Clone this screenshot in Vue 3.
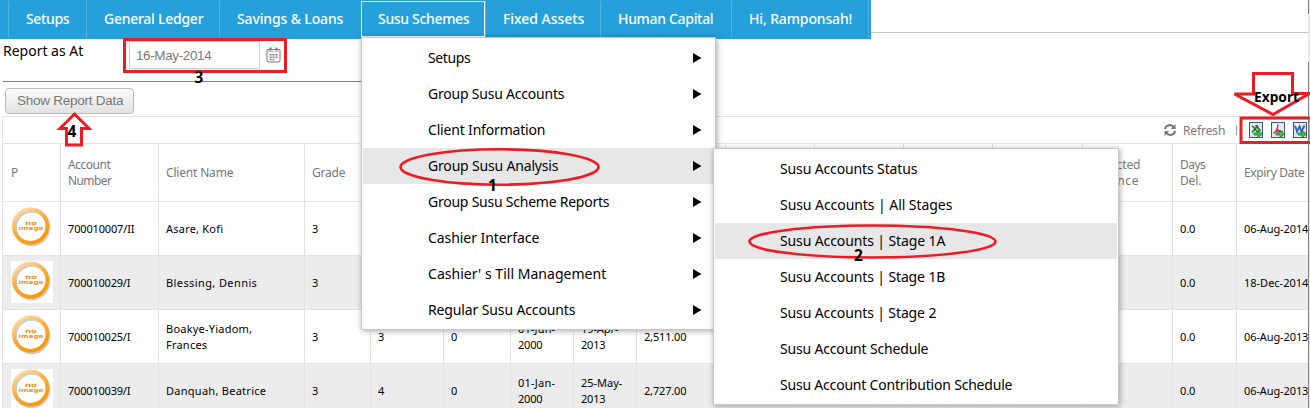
<script setup>
const nav = [
  { t: 'Setups', w: 43, cell: 78 },
  { t: 'General Ledger', w: 99, cell: 133 },
  { t: 'Savings & Loans', w: 106, cell: 142 },
  { t: 'Susu Schemes', w: 91, cell: 124, on: true },
  { t: 'Fixed Assets', w: 81, cell: 115 },
  { t: 'Human Capital', w: 95, cell: 131 },
  { t: 'Hi, Ramponsah!', w: 103, cell: 138 },
]
const menu = [
  ['Setups', 42], ['Group Susu Accounts', 136], ['Client Information', 117], ['Group Susu Analysis', 130],
  ['Group Susu Scheme Reports', 181], ['Cashier Interface', 111], ["Cashier' s Till Management", 178], ['Regular Susu Accounts', 147],
]
const sub = [
  ['Susu Accounts Status', 137], ['Susu Accounts | All Stages', 172], ['Susu Accounts | Stage 1A', 165], ['Susu Accounts | Stage 1B', 165],
  ['Susu Accounts | Stage 2', 156], ['Susu Account Schedule', 148], ['Susu Account Contribution Schedule', 232],
]
const heads = [
  [['P', 6]], [['Account', 42], ['Number', 43]], [['Client Name', 67]], [['Grade', 33]], [], [], [], [], [], [], [], [], [],
  [['Expected', 50], ['Balance', 49]], [['Days', 25], ['Del.', 21]], [['Expiry Date', 60]],
]
const gap = [[], [], [], [], []]
const d0 = [['0.0', 15]]
const rows = [
  [[['700010007/II', 66]], [['Asare, Kofi', 57]], [['3', 6]], [], [], [], [], [], ...gap, d0, [['06-Aug-2014', 64]]],
  [[['700010029/I', 62]], [['Blessing, Dennis', 91]], [['3', 6]], [], [], [], [], [], ...gap, d0, [['18-Dec-2014', 64]]],
  [[['700010025/I', 62]], [['Boakye-Yiadom,', 86], ['Frances', 41]], [['3', 6]], [['3', 6]], [['0', 6]], [['01-Jun-', 37], ['2000', 24]], [['19-Apr-', 37], ['2013', 24]], [['2,511.00', 42]], ...gap, d0, [['06-Aug-2013', 64]]],
  [[['700010039/I', 62]], [['Danquah, Beatrice', 100]], [['3', 6]], [['4', 6]], [['0', 6]], [['01-Jan-', 37], ['2000', 24]], [['25-May-', 41], ['2013', 24]], [['2,727.00', 42]], ...gap, d0, [['06-Aug-2013', 64]]],
]
// Spreads the letters of a label so that it fills the given width.
const vFit = {
  mounted(el, { value }) {
    const r = document.createRange()
    r.selectNodeContents(el)
    const n = el.textContent.length
    if (n > 1) el.style.letterSpacing = (value + 0.3 - r.getBoundingClientRect().width) / n + 'px'
  },
}
</script>

<template>
  <div class="page">
    <nav class="nav">
      <div v-for="n in nav" :key="n.t" class="tab" :class="{ on: n.on }" :style="{ width: n.cell + 'px' }"><span v-fit="n.w">{{ n.t }}</span></div>
    </nav>
    <div class="rule"></div>
    <section class="filter">
      <span v-fit="80" class="lbl">Report as At</span>
      <div class="datebox">
        <div class="date"><span v-fit="75">16-May-2014</span></div>
        <svg class="cal" width="15" height="16" viewBox="0 0 15 16">
          <path d="M1 2.500h13v11.500l-1 1H2l-1-1z" fill="#fff" stroke="#777" />
          <path d="M1.500 4.500h12" stroke="#bbb" />
          <path d="M4.500 .5v3M10.500 .5v3" stroke="#777" stroke-width="2" />
          <path d="M3.500 7h2v1.500h-2zM6.500 7h2v1.500h-2zM9.500 7h2v1.500h-2zM3.500 9.500h2V11h-2zM6.500 9.500h2V11h-2zM9.500 9.500h2V11h-2zM3.500 12h2v1.200h-2zM6.500 12h2v1.200h-2z" fill="#777" />
        </svg>
      </div>
    </section>
    <button class="show"><span v-fit="106">Show Report Data</span></button>
    <div class="grid">
      <div class="tools">
        <svg width="12" height="12" viewBox="0 0 12 12" fill="none" stroke="#777" stroke-width="2">
          <path d="M1 5.2A4.7 4.7 0 0 1 9.6 3.2M11 6.8A4.7 4.7 0 0 1 2.4 8.8" /><path d="M11.5 0v5H6.8zM.5 12V7h4.7z" fill="#777" stroke="none" />
        </svg>
        <span class="ref"><span v-fit="42">Refresh</span></span><i class="bar"></i>
        <svg v-for="k in 3" :key="k" class="file" width="14" height="16" viewBox="0 0 14 16">
          <rect x=".5" y=".5" width="13" height="15" fill="#dbe8f5" stroke="#46566b" />
          <path d="M2 2h6L2 9z" fill="#fff" />
          <path v-if="k === 1" d="M3 3.500l6 7M9 3.500l-6 7M6.500 3l5 6" stroke="#25752c" stroke-width="1.700" fill="none" />
          <path v-else-if="k === 2" d="M6 3c2 0 0 3 .2 4C5.500 9.500 4 10 2.500 11.500M6.200 7c1 2 3 2 5.500 2.500M4 9.500h6" stroke="#e3262b" stroke-width="1.300" fill="none" />
          <path v-else d="M2 3.500l2 6 2.500-5 2 5 3-6" stroke="#3568c5" stroke-width="2" fill="none" />
          <path d="M5 11h4V8.500l4.500 3.500L9 15.500V13H5z" fill="#55b83f" stroke="#22762c" stroke-width=".8" />
        </svg>
      </div>
      <div class="row head">
        <div v-for="(c, i) in heads" :key="i" class="cell"><span v-for="l in c" :key="l[0]" v-fit="l[1]">{{ l[0] }}</span></div>
      </div>
      <div v-for="(r, ri) in rows" :key="ri" class="row" :class="{ alt: ri % 2 }">
        <div class="cell pic">
          <svg width="42" height="42" viewBox="0 0 42 42">
            <defs>
              <linearGradient id="ring" x1="0" y1="0" x2=".55" y2="1"><stop offset="0" stop-color="#fde6c4" /><stop offset=".55" stop-color="#fbab37" /><stop offset="1" stop-color="#ff9800" /></linearGradient>
            </defs>
            <rect width="42" height="42" fill="#fff" />
            <circle cx="20.700" cy="20.500" r="16.700" fill="none" stroke="#ccc" stroke-width="4" />
            <circle cx="19.500" cy="19" r="16.800" fill="none" stroke="url(#ring)" stroke-width="3.600" />
            <g fill="#e9962c" font-family="DejaVu Sans" font-weight="bold"><text x="14" y="17.500" font-size="6" textLength="12" lengthAdjust="spacingAndGlyphs">no</text><text x="7.500" y="23" font-size="5.500" textLength="25" lengthAdjust="spacingAndGlyphs">image</text></g>
          </svg>
        </div>
        <div v-for="(c, i) in r" :key="i" class="cell"><span v-for="l in c" :key="l[0]" v-fit="l[1]">{{ l[0] }}</span></div>
      </div>
    </div>
    <div class="edge"></div>

    <div class="menu main">
      <div v-for="(m, i) in menu" :key="m[0]" class="item" :class="{ hot: i === 3 }"><span v-fit="m[1]">{{ m[0] }}</span><svg width="9" height="10" viewBox="0 0 9 10"><path d="M0 0l8.500 5L0 10z" /></svg></div>
    </div>
    <div class="menu sub">
      <div v-for="(m, i) in sub" :key="m[0]" class="item" :class="{ hot: i === 2 }"><span v-fit="m[1]">{{ m[0] }}</span></div>
    </div>

    <svg class="marks" width="1310" height="408" viewBox="0 0 1310 408" fill="none" stroke="#ed1c24" stroke-width="3">
      <rect x="124.500" y="39.500" width="161" height="32" />
      <path d="M74.500 114L60 128.500h6.500v16.500h15v-16.500H89z" />
      <ellipse cx="499.500" cy="167" rx="99" ry="17.700" stroke-width="2.600" />
      <ellipse cx="872.500" cy="241.500" rx="123" ry="16" stroke-width="2.600" />
      <path d="M1253.500 73.500h39v20h17L1273 114.500l-38.500-20.500h19z" />
      <rect x="1241" y="118" width="70" height="24.500" />
      <g class="nums" fill="#000" stroke="none">
        <text x="194.500" y="83">3</text><text x="67.500" y="136.500">4</text><text x="488" y="190.500">1</text><text x="854" y="260.500">2</text>
        <text class="ex" x="1254" y="101.500" textLength="45" lengthAdjust="spacingAndGlyphs">Export</text>
      </g>
    </svg>
  </div>
</template>

<style>
body { margin: 0; overflow: hidden; }
</style>
<style scoped>
.page { position: relative; width: 1310px; height: 408px; overflow: hidden; background: #fff; font-family: "Noto Sans", sans-serif; color: #000; white-space: nowrap; }
.nav { box-sizing: border-box; width: 871px; height: 39px; padding: 1px 0 2px 8px; background: #25a0da; display: flex; color: #fff; font-size: 14px; font-weight: 500; }
.tab { box-sizing: border-box; height: 36px; flex: none; border-left: 1px solid #52b3e1; display: flex; align-items: center; padding: 0 0 2px 17px; }
.tab.on { border: 1px solid #fff; padding-left: 16px; }
.tab:last-child { border-right: 1px solid #52b3e1; }
.rule { position: absolute; left: 871px; right: 2px; top: 32px; height: 1px; background: #c8c8c8; }
.filter { box-sizing: border-box; height: 43px; width: 700px; margin-left: 3px; border-bottom: 1px solid #16a5dc; display: flex; align-items: flex-start; }
.lbl { width: 120px; font-size: 14px; line-height: 19px; padding-top: 2px; }
.datebox { display: flex; align-items: flex-start; gap: 7px; padding-top: 2px; margin-left: 6px; }
.date { box-sizing: border-box; width: 131px; height: 28px; border: 1px solid #d0d0d0; padding-left: 6px; font: 13.5px/28px "Liberation Sans", sans-serif; color: #7b7b7b; }
.cal { margin: 6px 0 0 -1px; }
.show { display: block; box-sizing: border-box; margin: 6px 0 0 5px; width: 129px; height: 26px; border: 1px solid #bbb; border-radius: 4px; padding: 0 0 0 11px; text-align: left; background: linear-gradient(#fafafa, #e2e2e2); color: #777; font: 13.5px/22px "Liberation Sans", sans-serif; }
.grid { margin: 2px 0 0 2px; width: 1306px; border-left: 1px solid #e3e3e3; border-top: 1px solid #e3e3e3; }
.tools { height: 26px; border-bottom: 1px solid #e3e3e3; display: flex; align-items: center; padding-left: 1161px; color: #777; }
.ref { font-size: 12px; margin-left: 7px; width: 53px; flex: none; }
.bar { width: 1px; height: 10px; background: #999; margin-right: 12px; flex: none; }
.file { margin-right: 8px; flex: none; }
.tools > svg:first-child { flex: none; }
.row { display: grid; grid-template-columns: 58px 98px 146px 66px 73px 67px 63px 63px 89px 89px 89px 89px 90px 90px 64px 72px; height: 53px; border-bottom: 1px solid #e3e3e3; font-size: 11px; line-height: 16px; }
.head { height: 57px; color: #777; font-size: 12px; }
.alt { background: #ececec; }
.cell { box-sizing: border-box; border-right: 1px solid #e3e3e3; padding-left: 7px; display: flex; flex-direction: column; justify-content: center; align-items: flex-start; min-width: 0; }
.cell:first-child { padding-left: 8px; }
.cell:last-child { border: 0; }
.pic svg { display: block; margin-top: -2px; }
.edge { position: absolute; box-sizing: border-box; left: 1308px; top: 0; width: 2px; height: 408px; background: #ececec; border-left: 1px solid; border-image: linear-gradient(#808080 15px, #e3e3e3 15px, #e3e3e3 63px, #808080 63px) 1; }
.menu { position: absolute; box-sizing: border-box; background: #fff; border: 1px solid #c8c8c8; box-shadow: 1px 1px 6px rgba(0, 0, 0, .35); font-size: 14px; }
.main { left: 361px; top: 37px; width: 355px; height: 293px; padding: 2px 1px; }
.sub { left: 713px; top: 148px; width: 406px; height: 257px; padding: 2px 1px; }
.item { height: 36px; display: flex; align-items: center; justify-content: space-between; padding: 0 12px 0 65px; }
.item span { padding-bottom: 2px; }
.hot { background: #e7e7e7; }
.marks { position: absolute; left: 0; top: 0; }
.nums { font: bold 15.5px "Noto Sans", sans-serif; }
.ex { font-size: 13.5px; }
</style>
